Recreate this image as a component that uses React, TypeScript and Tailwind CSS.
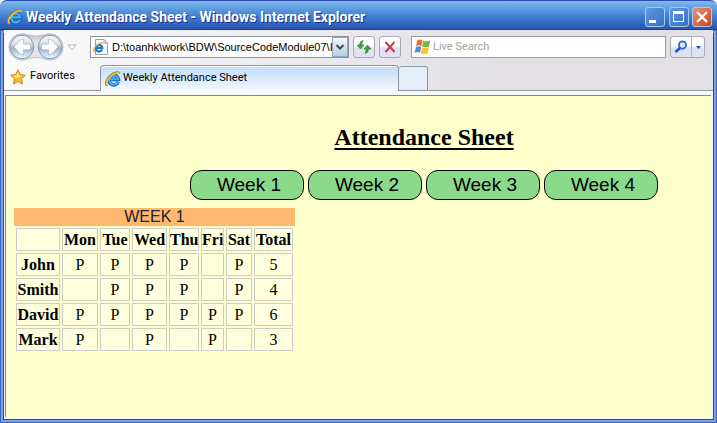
import type { ReactNode } from "react";

const WEEKS = ["Week 1", "Week 2", "Week 3", "Week 4"];

const DAYS = [
  { name: "Mon", width: "w-9" },
  { name: "Tue", width: "w-[30px]" },
  { name: "Wed", width: "w-[35px]" },
  { name: "Thu", width: "w-[30px]" },
  { name: "Fri", width: "w-[23px]" },
  { name: "Sat", width: "w-[26px]" },
];

const STUDENTS = [
  { name: "John", days: "PPPP-P", total: 5 },
  { name: "Smith", days: "-PPP-P", total: 4 },
  { name: "David", days: "PPPPPP", total: 6 },
  { name: "Mark", days: "P-P-P-", total: 3 },
];

function ExplorerIcon({ className }: { className: string }) {
  return (
    <svg viewBox="0 0 16 16" className={className} aria-hidden="true">
      <path
        d="M13.200 10.800A4.800 4.800 0 1 1 13.500 8.500H5"
        fill="none"
        stroke="#1560b8"
        strokeWidth="3.600"
      />
      <path
        d="M12.800 11A4.500 4.500 0 1 1 13.200 8.200H5.400"
        fill="none"
        stroke="#45b4f0"
        strokeWidth="2"
      />
      <path
        d="M2.600 14.500C-.4 14 1 8.600 5 5C9 1.400 13.800 .4 14.600 2.400"
        fill="none"
        stroke="#b87510"
        strokeWidth="2.200"
      />
      <path
        d="M2.800 14.300C.2 13.500 1.800 8.800 5.400 5.500C9 2.200 13.500 .8 14.400 2.500"
        fill="none"
        stroke="#ffc93c"
        strokeWidth="1.400"
      />
    </svg>
  );
}

function NavButtons() {
  return (
    <div className="relative flex h-[28px] w-[56px] shrink-0 items-center justify-between px-px">
      <svg
        viewBox="0 0 56 28"
        className="absolute inset-0 h-full w-full"
        aria-hidden="true"
      >
        <defs>
          <linearGradient id="shell" x1="0" y1="0" x2="0" y2="1">
            <stop offset="0" stopColor="#b5b8bd" />
            <stop offset="0.3" stopColor="#e4e6ea" />
            <stop offset="1" stopColor="#e0e2e5" />
          </linearGradient>
          <linearGradient id="orb" x1="0" y1="0" x2="0" y2="1">
            <stop offset="0" stopColor="#f8fafc" />
            <stop offset="0.4" stopColor="#d3dce6" />
            <stop offset="0.55" stopColor="#9fb2c9" />
            <stop offset="0.8" stopColor="#c3dff6" />
            <stop offset="1" stopColor="#f0fcff" />
          </linearGradient>
        </defs>
        <path
          d="M14 .8C19 .8 22 3 28 3S37 .8 42 .8A13.200 13.200 0 0 1 42 27.200C37 27.200 34 24.500 28 24.500S19 27.200 14 27.200A13.200 13.200 0 0 1 14 .8Z"
          fill="url(#shell)"
          stroke="#b9bbbf"
          strokeWidth="0.800"
        />
        <circle cx="14" cy="14" r="11.800" fill="url(#orb)" stroke="#8b98a8" />
        <circle cx="42" cy="14" r="11.800" fill="url(#orb)" stroke="#8b98a8" />
        <path
          d="M6 14L13 6.500H15.500V11.200H22.500V16.800H15.500V21.500H13Z"
          fill="#fff"
          stroke="#8799b0"
          strokeWidth="0.500"
        />
        <path
          d="M50 14L43 6.500H40.500V11.200H33.500V16.800H40.500V21.500H43Z"
          fill="#fff"
          stroke="#8799b0"
          strokeWidth="0.500"
        />
      </svg>
      <button aria-label="Back" className="relative size-6 rounded-full" />
      <button aria-label="Forward" className="relative size-6 rounded-full" />
    </div>
  );
}

function ToolButton({
  label,
  children,
}: {
  label: string;
  children: ReactNode;
}) {
  return (
    <button
      aria-label={label}
      className="flex size-[22px] shrink-0 items-center justify-center rounded-[3px] border border-[#a9a9b4] bg-linear-to-b from-[#fdfdff] from-45% to-[#dde1f0] to-55%"
    >
      {children}
    </button>
  );
}

function TitleBar() {
  const button =
    "flex size-5 items-center justify-center rounded-[3px] border border-[#a9cdf0]";
  return (
    <header className="flex h-[30px] shrink-0 items-center rounded-t-[7px] border-t border-b border-t-[#2949ae] border-b-[#1d3e97] bg-linear-to-b from-[#80bbea] via-[#4384d6] via-50% to-[#2b54b0] pr-[5px] pl-[7px]">
      <ExplorerIcon className="mt-1 size-4 shrink-0" />
      <h1 className="mt-1 ml-[3px] grow font-[Roboto,sans-serif] text-[14px] leading-5 font-bold whitespace-nowrap text-white [text-shadow:1px_1px_0_#15308a]">
        Weekly Attendance Sheet - Windows Internet Explorer
      </h1>
      <div className="mt-1 flex gap-[3px]">
        <button
          aria-label="Minimize"
          className={`${button} bg-linear-to-br from-[#5d98de] to-[#3a72c8]`}
        >
          <svg viewBox="0 0 20 20" className="size-5 shrink-0">
            <rect x="4" y="13" width="7" height="3" fill="#fff" />
          </svg>
        </button>
        <button
          aria-label="Maximize"
          className={`${button} ml-px bg-linear-to-br from-[#5d98de] to-[#3a72c8]`}
        >
          <svg viewBox="0 0 20 20" className="size-5 shrink-0">
            <path
              d="M4 4H15V15H4ZM5 7V14H14V7Z"
              fill="#fff"
              fillRule="evenodd"
            />
          </svg>
        </button>
        <button
          aria-label="Close"
          className={`${button} bg-linear-to-br from-[#e99078] to-[#cb4218]`}
        >
          <svg viewBox="0 0 20 20" className="size-5 shrink-0">
            <path d="M5 5L15 15M15 5L5 15" stroke="#fff" strokeWidth="2.400" />
          </svg>
        </button>
      </div>
    </header>
  );
}

function AddressBar() {
  return (
    <div className="flex h-[34px] items-center pr-2 pl-[4px]">
      <NavButtons />
      <button aria-label="Recent pages" className="ml-[3px] shrink-0">
        <svg viewBox="0 0 10 7" className="h-[7px] w-[10px]">
          <path d="M1 1H9L5 5.500Z" fill="#fff" stroke="#b2b4ba" />
        </svg>
      </button>
      <div className="ml-[13px] flex h-[22px] w-[259px] shrink-0 items-center border border-[#8e9197] bg-white">
        <svg viewBox="0 0 16 16" className="ml-[2px] size-4 shrink-0">
          <path d="M2.500 .5H11L14.500 4V15.500H2.500Z" fill="#fff" stroke="#9a9da5" />
          <path d="M11 .5V4H14.500" fill="none" stroke="#9a9da5" />
          <svg x="0" y="3" width="11" height="11" viewBox="0 0 16 16">
            <path
              d="M13.200 10.800A4.800 4.800 0 1 1 13.500 8.500H5"
              fill="none"
              stroke="#1b78cf"
              strokeWidth="3.200"
            />
            <path
              d="M2.600 14.500C-.4 14 1 8.600 5 5C9 1.400 13.800 .4 14.600 2.400"
              fill="none"
              stroke="#eeb02c"
              strokeWidth="2"
            />
          </svg>
        </svg>
        <input
          aria-label="Address"
          defaultValue="D:\toanhk\work\BDW\SourceCodeModule07\I"
          className="ml-[3px] min-w-0 grow bg-transparent font-['Liberation_Sans',Arial,sans-serif] text-black outline-none"
        />
        <button
          aria-label="Show addresses"
          className="flex h-5 w-4 shrink-0 items-center justify-center border border-[#92a6bf] bg-linear-to-b from-[#f1f7fc] to-[#b9cfe5]"
        >
          <svg viewBox="0 0 10 8" className="h-2 w-[10px] shrink-0">
            <path
              d="M1.500 2L5 5.500L8.500 2"
              fill="none"
              stroke="#414d60"
              strokeWidth="2"
            />
          </svg>
        </button>
      </div>
      <div className="ml-1 flex shrink-0 gap-1">
        <ToolButton label="Refresh">
          <svg viewBox="0 0 16 16" className="size-4 shrink-0">
            <path
              d="M7 1.500Q3.500 2 3.600 6H1L4.500 10L8 6H5.800Q5.600 3.500 7 1.500Z"
              fill="#3aa536"
              stroke="#1c7d22"
              strokeWidth="0.600"
            />
            <path
              d="M9 14.500Q12.500 14 12.400 10H15L11.500 6L8 10H10.200Q10.400 12.500 9 14.500Z"
              fill="#3aa536"
              stroke="#1c7d22"
              strokeWidth="0.600"
            />
          </svg>
        </ToolButton>
        <ToolButton label="Stop">
          <svg viewBox="0 0 12 12" className="size-3 shrink-0">
            <path
              d="M1.500 1L10.500 11M10.500 1L1.500 11"
              stroke="#cc3d42"
              strokeWidth="2"
            />
          </svg>
        </ToolButton>
      </div>
      <div className="ml-[10px] flex h-[22px] min-w-0 grow items-center border border-[#9a9da3] bg-white">
        <svg viewBox="0 0 17 16" className="ml-[2px] h-4 w-[17px] shrink-0">
          <path d="M3.200 1.500Q6 -.2 8.500 1.200L7.400 7Q5 5.600 2.100 7.100Z" fill="#ec6b38" />
          <path d="M9.300 1.600Q12.500 3.200 16.300 1.600L15 7.600Q12 9.100 8.200 7.500Z" fill="#79b83c" />
          <path d="M1.900 8Q4.800 6.500 7.200 7.900L6 13.700Q3.500 12.300 .6 13.900Z" fill="#4a8fdc" />
          <path d="M8 8.400Q11.500 10 14.800 8.500L13.500 14.500Q10 16 6.800 14.200Z" fill="#fac332" />
        </svg>
        <input
          aria-label="Live Search"
          placeholder="Live Search"
          className="ml-[2px] min-w-0 grow bg-transparent outline-none placeholder:text-[#a2a2a2]"
        />
      </div>
      <div className="ml-1 flex h-[22px] w-[35px] shrink-0 rounded-[3px] border border-[#a9a9b4] bg-linear-to-b from-[#fdfdff] from-45% to-[#dde1f0] to-55%">
        <button
          aria-label="Search"
          className="flex w-[21px] items-center justify-center border-r border-[#b5b5c0]"
        >
          <svg viewBox="0 0 14 14" className="size-[14px] shrink-0">
            <circle
              cx="8.500"
              cy="5"
              r="3.600"
              fill="#d9ebff"
              stroke="#2a62dc"
              strokeWidth="1.800"
            />
            <path d="M6 8L1.500 12" stroke="#1b4ccc" strokeWidth="2.400" />
          </svg>
        </button>
        <button
          aria-label="Search options"
          className="flex grow items-center justify-center"
        >
          <svg viewBox="0 0 5 3" className="h-[3px] w-[5px] shrink-0">
            <path d="M0 0H5L2.500 3Z" fill="#174bd2" />
          </svg>
        </button>
      </div>
    </div>
  );
}

function TabRow() {
  return (
    <div className="flex h-[27px] items-stretch">
      <button className="flex w-[96px] shrink-0 items-center border-b border-[#8d959f] pb-px pl-[6px]">
        <svg viewBox="0 0 16 16" className="size-4 shrink-0">
          <path
            d="M8 .8L10.200 5.600L15.400 6.200L11.500 9.800L12.600 15L8 12.400L3.400 15L4.500 9.800L.6 6.200L5.800 5.600Z"
            fill="#ffb92e"
            stroke="#ce841b"
            strokeLinejoin="round"
          />
          <path d="M8 3L9.300 6.500L12.500 7L8.500 8L5 10L5.500 8L3 7L6.500 6.500Z" fill="#ffe794" />
        </svg>
        <span className="ml-[4px]">Favorites</span>
      </button>
      <button className="mt-px flex w-[299px] shrink-0 items-center rounded-t-[4px] border border-b-0 border-[#8d959f] bg-linear-to-b from-[#bfdcfa] to-[#f4f8fd] pl-[4px] shadow-[inset_0_1px_0_#ffffff]">
        <ExplorerIcon className="size-4 shrink-0" />
        <span className="ml-[2px] whitespace-nowrap">
          Weekly Attendance Sheet
        </span>
      </button>
      <button
        aria-label="New tab"
        className="mt-[2px] w-[29px] shrink-0 rounded-t-[3px] border border-l-0 border-[#8d959f] bg-[#e3eefa]"
      />
      <div className="grow border-b border-[#8d959f]" />
    </div>
  );
}

function AttendanceTable() {
  const cell = "h-[23px] border border-[#cccccc] bg-[#ffffdd] p-0 text-center";
  return (
    <table className="w-[281px] table-fixed border-separate border-spacing-[2px] text-base leading-5">
      <caption className="bg-[#ffb870] text-center font-['Liberation_Sans',Arial,sans-serif] leading-[18px] text-[#222222]">
        WEEK 1
      </caption>
      <thead>
        <tr>
          <td className={`${cell} w-11`} />
          {DAYS.map((day) => (
            <th key={day.name} scope="col" className={`${cell} ${day.width}`}>
              {day.name}
            </th>
          ))}
          <th scope="col" className={`${cell} w-[39px]`}>
            Total
          </th>
        </tr>
      </thead>
      <tbody>
        {STUDENTS.map((student) => (
          <tr key={student.name}>
            <th scope="row" className={cell}>
              {student.name}
            </th>
            {DAYS.map((day, i) => (
              <td key={day.name} className={cell}>
                {student.days[i] === "P" ? "P" : ""}
              </td>
            ))}
            <td className={cell}>{student.total}</td>
          </tr>
        ))}
      </tbody>
    </table>
  );
}

export default function App() {
  return (
    <div className="flex min-h-screen flex-col bg-[#eef2f8] font-[Roboto,Tahoma,sans-serif] text-[11px] text-black">
      <TitleBar />
      <div className="flex grow flex-col px-1 pb-1 shadow-[inset_0_0_0_1px_#3a64bd,inset_0_0_0_3px_#79a5e6,inset_0_0_0_4px_#27489f]">
        <nav className="bg-linear-to-r from-[#fafafb] to-[#e2e0e5] to-70%">
          <AddressBar />
          <TabRow />
        </nav>
        <div className="flex grow flex-col bg-[#f7f8fa] pt-1 pr-[2px] pb-[2px] pl-px">
          <main className="grow border-t border-l border-[#85868a] bg-[#ffffcc] px-2 font-['Liberation_Serif','Times_New_Roman',serif]">
            <div className="flex flex-col items-center pt-[27px] pl-[131px]">
              <h2 className="text-2xl leading-7 font-bold underline decoration-2 underline-offset-[3px]">
                Attendance Sheet
              </h2>
              <div className="mt-[19px] flex gap-1">
                {WEEKS.map((week) => (
                  <button
                    key={week}
                    className="h-[30px] w-[114px] rounded-xl border border-black bg-[#8bda8b] pl-1 font-['Liberation_Sans',Arial,sans-serif] text-[19px] leading-7"
                  >
                    {week}
                  </button>
                ))}
              </div>
            </div>
            <div className="mt-2">
              <AttendanceTable />
            </div>
          </main>
        </div>
      </div>
    </div>
  );
}
